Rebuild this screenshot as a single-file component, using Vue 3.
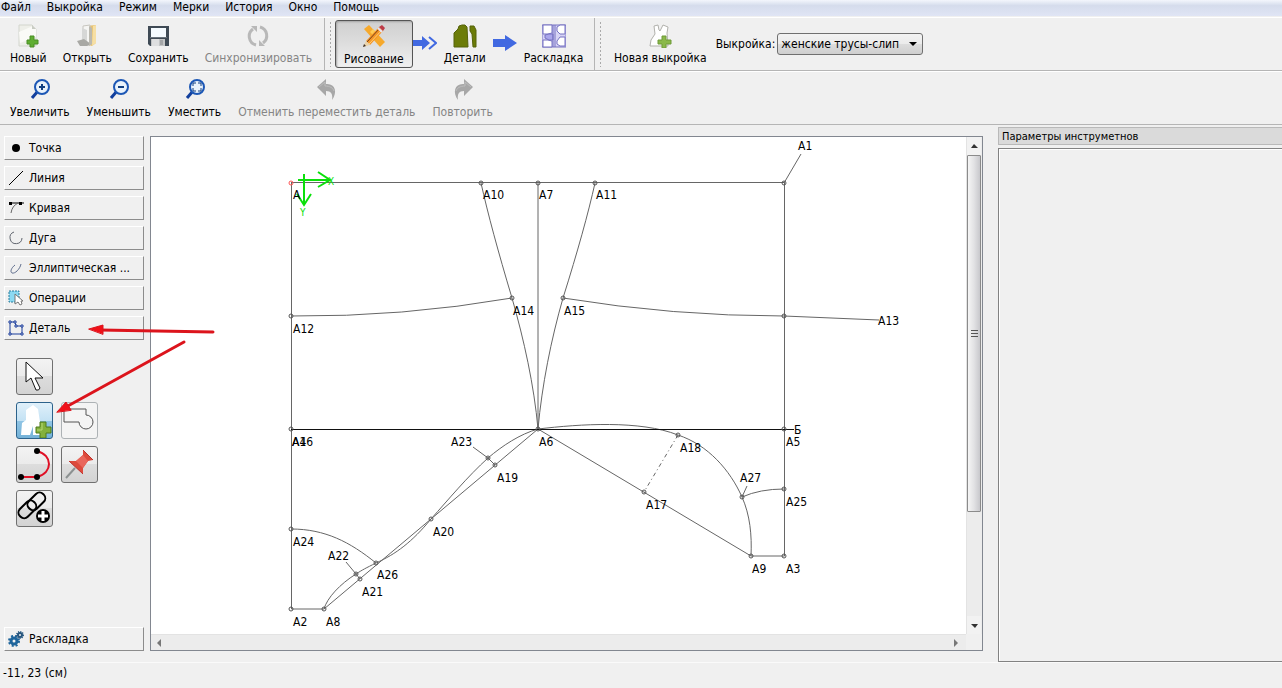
<template>
  <div class="app-window">
    <nav class="menu-bar">
      <a v-for="item in menu" :key="item" href="#" @click.prevent>{{ item }}</a>
    </nav>

    <header class="toolbar">
      <div class="group group-file">
        <button class="tool" type="button">
          <svg width="24" height="24" viewBox="0 0 24 24">
            <path d="M3 1h13l4 4v17H3z" fill="#eeefe9" stroke="#d3d6ce" />
            <path d="M3 8l14-6 3 3v8L4 19z" fill="#fafaf7" />
            <path d="M16 1v4h4z" fill="#c9ccc4" />
            <path d="M12 13h4v4h4v4h-4v3h-4v-3H9v-4h3z" transform="translate(2,-1)" fill="#5fae31" stroke="#4b8d27" />
          </svg>
          <span>Новый</span>
        </button>
        <button class="tool" type="button">
          <svg width="24" height="24" viewBox="0 0 24 24">
            <path d="M10 2l11-1v18l-4 3-7-2z" fill="#e5c274" />
            <path d="M18 2l3-1v18l-4 3z" fill="#f6dfa4" />
            <path d="M8 2l7-1v20H8z" fill="#f5f5f3" stroke="#c8c6c0" />
            <path d="M7 4l5 2v14l-5-3z" fill="#d6d7d6" />
            <path d="M2 17l7-2 7 5-4 2H5z" fill="#a8a8a4" />
            <path d="M14 2l3 2v16l-3 2z" fill="#bbb9b0" />
          </svg>
          <span>Открыть</span>
        </button>
        <button class="tool" type="button">
          <svg width="24" height="24" viewBox="0 0 24 24">
            <path d="M2 2h21v20H4l-2-2z" fill="#3f4a55" />
            <path d="M5 4h15v9H5z" fill="#f5fbff" />
            <path d="M4 13h17v1H4z" fill="#69737c" />
            <path d="M5 15h14v7H5z" fill="#c3c5c6" />
            <path d="M6 15h7v7H6z" fill="#dedfe0" />
            <path d="M14 16h3v5h-3z" fill="#a4a6a8" />
          </svg>
          <span>Сохранить</span>
        </button>
        <button class="tool" type="button" disabled>
          <svg width="24" height="24" viewBox="0 0 24 24" fill="none" stroke="#b8b8b8" stroke-width="3">
            <path d="M10 21A9 9 0 0 1 7 5" />
            <path d="M14 3a9 9 0 0 1 3 16" />
            <path d="M5 2h6v6zM19 22h-6v-6z" fill="#b8b8b8" stroke="none" />
          </svg>
          <span>Синхронизировать</span>
        </button>
      </div>

      <div class="group group-mode">
        <i class="grip"></i>
        <button class="tool pressed" type="button">
          <svg width="24" height="24" viewBox="0 0 24 24">
            <path d="M2 5l5-4 16 17-5 5z" fill="#f6a92c" />
            <path d="M8 8l3-3 3 3-3 3z" fill="#ffcb55" />
            <path d="M4 17L17 3l4 4L8 21z" fill="#f49526" />
            <path d="M5 18L18 4" stroke="#764019" stroke-width="1" />
            <path d="M7 20L20 6" stroke="#ffd076" stroke-width="1" />
            <path d="M4 17l4 4-7 2z" fill="#ead2a8" />
            <path d="M1 23l1-3 2 2z" fill="#3d3028" />
            <path d="M17 3l3-2 3 3-2 3z" fill="#bd3b48" />
            <path d="M16 4l4 4" stroke="#e9e3ef" stroke-width="2" />
          </svg>
          <span>Рисование</span>
        </button>
        <svg class="step" width="24" height="24" viewBox="0 0 24 24">
          <path d="M0 8h9V4l8 7-8 7v-4H0z" fill="#4169e1" />
          <path d="M16 5l7 6-7 6" fill="none" stroke="#4169e1" stroke-width="2" />
        </svg>
        <button class="tool" type="button">
          <svg width="24" height="24" viewBox="0 0 24 24">
            <path d="M1 9l4-4 1-3 3-1h3l2 2 1 20H1z" fill="#6c7c08" stroke="#55620b" />
            <path d="M17 2h4l2 4v17h-3l-1-13-2-3z" fill="#6c7c08" stroke="#55620b" />
          </svg>
          <span>Детали</span>
        </button>
        <svg class="step" width="24" height="24" viewBox="0 0 24 24">
          <path d="M0 7h12V3l12 8-12 8v-4H0z" fill="#4169e1" />
        </svg>
        <button class="tool" type="button">
          <svg width="24" height="24" viewBox="0 0 24 24" fill="#fff" stroke="#7673c2">
            <path d="M0 1h24v22H0z" fill="#d7d4f5" />
            <path d="M1 1h9v8l-4 1H1zM1 16h5l4 1v6H1z" />
            <path d="M15 3l3-2h5v9h-5l-3-3zM15 17l3-4h5v9h-5l-3-2z" />
            <path d="M3 11l4-1h4v6H7l-4-2z" fill="#aaa6eb" />
            <path d="M13 1v22M11 1v22" />
          </svg>
          <span>Раскладка</span>
        </button>
      </div>

      <div class="group group-pattern">
        <i class="grip"></i>
        <button class="tool" type="button">
          <svg width="24" height="24" viewBox="0 0 24 24">
            <path d="M6 2l4-1 1 5 1 1 3-6 5 2-1 6 1 13H2l1-6 4-6z" fill="#fff" stroke="#b1b1ac" />
            <path d="M14 12h4v4h5v4h-5v4h-4v-4h-4v-4h4z" fill="#8ab84a" stroke="#6f9a38" />
          </svg>
          <span>Новая выкройка</span>
        </button>
        <label class="pattern-label" for="pattern">Выкройка:</label>
        <div class="select-wrap">
          <select id="pattern">
            <option>женские трусы-слип</option>
          </select>
          <svg class="caret" width="8" height="4" viewBox="0 0 8 4"><path d="M0 0h8L4 4z" /></svg>
        </div>
      </div>
    </header>

    <div class="toolbar toolbar-view">
      <div class="group">
        <button v-for="z in zooms" :key="z.label" class="tool" type="button">
          <svg width="22" height="22" viewBox="0 0 22 22" fill="none">
            <path d="M9 13l-6 7" stroke="#123f9d" stroke-width="3" />
            <circle cx="13" cy="9" r="7" fill="#e9f2fb" stroke="#1c57b5" stroke-width="2" />
            <path :d="z.path" stroke="#123f80" :stroke-width="z.stroke" />
          </svg>
          <span>{{ z.label }}</span>
        </button>
        <button class="tool" type="button" disabled>
          <svg width="22" height="22" viewBox="0 0 22 22">
            <path d="M1 9l9-8v5c9-1 12 8 6 16 1-6-1-9-6-9v5z" fill="#a7a7a7" />
            <path d="M3 9l6-5v4c5 0 8 2 9 5" fill="none" stroke="#bdbdbd" />
          </svg>
          <span>Отменить переместить деталь</span>
        </button>
        <button class="tool" type="button" disabled>
          <svg width="22" height="22" viewBox="0 0 22 22">
            <path d="M21 9l-9-8v5C3 5 0 14 6 22c-1-6 1-9 6-9v5z" fill="#a7a7a7" />
            <path d="M19 9l-6-5v4c-5 0-8 2-9 5" fill="none" stroke="#bdbdbd" />
          </svg>
          <span>Повторить</span>
        </button>
      </div>
    </div>

    <main class="workspace">
      <aside class="toolbox">
        <button class="section" type="button">
          <svg width="16" height="16" viewBox="0 0 16 16"><circle cx="8" cy="8" r="4" /></svg>
          Точка
        </button>
        <button class="section" type="button">
          <svg width="16" height="16" viewBox="0 0 16 16"><path d="M1 15L15 1" stroke="#000" /></svg>
          Линия
        </button>
        <button class="section" type="button">
          <svg width="16" height="16" viewBox="0 0 16 16" fill="none">
            <path d="M2 3h14" stroke="#000" />
            <path d="M1 2h3v3H1zM11 2h3v3h-3z" fill="#000" />
            <path d="M10 3Q4 6 3 13" stroke="#666" />
          </svg>
          Кривая
        </button>
        <button class="section" type="button">
          <svg width="16" height="16" viewBox="0 0 16 16" fill="none">
            <path d="M6 2A6 6 0 1 0 14 8" stroke="#60656e" />
          </svg>
          Дуга
        </button>
        <button class="section" type="button">
          <svg width="16" height="16" viewBox="0 0 16 16" fill="none">
            <path d="M7 5C3 8 2 12 4 13c3 1 8-4 9-9" stroke="#5d6c8c" />
          </svg>
          Эллиптическая ...
        </button>
        <button class="section" type="button">
          <svg width="16" height="16" viewBox="0 0 16 16">
            <path d="M1 1h10v11H1z" fill="#8bd9f2" stroke="#287d9c" stroke-dasharray="2 1" />
            <path d="M7 4v10l3-2 2 3 2-1-1-3h2z" fill="#fff" stroke="#777" />
          </svg>
          Операции
        </button>
        <button class="section" type="button">
          <svg width="16" height="16" viewBox="0 0 16 16" fill="none" stroke="#1a3c9b">
            <path d="M2 2h5l1 4h6v8H2z" />
            <path d="M1 1h2v2H1zM6 1h2v2H6zM7 5h2v2H7zM13 5h2v2h-2zM13 13h2v2h-2zM1 13h2v2H1z" fill="#fff" />
          </svg>
          Деталь
        </button>

        <div class="palette">
          <button class="pick lone" type="button" aria-label="Указатель">
            <svg width="35" height="35" viewBox="0 0 35 35">
              <path d="M9 3v20l5-4 5 12q3 1 4-2l-5-10h8z" fill="#fff" stroke="#111" />
            </svg>
          </button>
          <button class="pick active" type="button" aria-label="Новая деталь">
            <svg width="35" height="35" viewBox="0 0 35 35">
              <path d="M9 7l7-5 5 4 2 13v13h-7v-9l-3 9H4l1-12 4-3z" fill="#fff" />
              <path d="M23 19h6v5h5v6h-5v5h-6v-5h-4v-6h4z" fill="#83b13c" stroke="#4e7b1c" />
              <path d="M25 20v7h-5" fill="none" stroke="#b9d979" />
            </svg>
          </button>
          <button class="pick" type="button" disabled aria-label="Объединить">
            <svg width="35" height="35" viewBox="0 0 35 35" fill="none" stroke="#555">
              <path d="M2 6h22v6A7 7 0 1 1 17 19H2z" />
            </svg>
          </button>
          <button class="pick" type="button" aria-label="Внутренний путь">
            <svg width="35" height="35" viewBox="0 0 35 35">
              <path d="M4 30h16M20 4C36 8 36 26 20 30" fill="none" stroke="#df1025" stroke-width="2" />
              <circle cx="20" cy="4" r="3" /><circle cx="4" cy="30" r="3" /><circle cx="20" cy="30" r="3" />
            </svg>
          </button>
          <button class="pick" type="button" aria-label="Булавка">
            <svg width="35" height="35" viewBox="0 0 35 35">
              <path d="M13 21L4 31" stroke="#8c9191" stroke-width="2" />
              <path d="M21 3l10 10-5 1-5 7 0 6L7 14h7l7-6z" fill="#dd4a3c" />
              <path d="M21 8l5 6-5 7-7-7z" fill="#e9665b" />
              <path d="M21 3l10 10M7 14l14 13" stroke="#bd302b" />
            </svg>
          </button>
          <button class="pick" type="button" aria-label="Группа">
            <svg width="35" height="35" viewBox="0 0 35 35" fill="none" stroke="#000" stroke-width="2">
              <rect x="-10" y="-5" width="20" height="11" rx="5" transform="translate(19,10) rotate(-45)" />
              <rect x="-10" y="-5" width="20" height="11" rx="5" transform="translate(10,18) rotate(-45)" />
              <circle cx="26" cy="25" r="7" fill="#000" stroke="none" />
              <path d="M26 20v10M21 25h10" stroke="#fff" stroke-width="3" />
            </svg>
          </button>
        </div>

        <button class="section section-last" type="button">
          <svg width="16" height="16" viewBox="0 0 16 16" fill="none">
            <circle cx="6" cy="10" r="3" stroke="#1e659c" stroke-width="3" />
            <circle cx="6" cy="10" r="5" stroke="#1e659c" stroke-width="2" stroke-dasharray="2 2" />
            <circle cx="12" cy="4" r="2" stroke="#28577f" stroke-width="2" />
            <circle cx="12" cy="4" r="3" stroke="#28577f" stroke-width="2" stroke-dasharray="1 1" />
          </svg>
          Раскладка
        </button>
      </aside>

      <section class="scene">
        <div class="viewport">
          <svg class="drawing" width="815" height="497" viewBox="151 137 815 497">
            <g class="lines">
              <path v-for="d in lines" :key="d" :d="d" />
              <path class="base" d="M291 429.500H794" />
              <path class="dash-dot" d="M678 435L644 492" />
            </g>
            <g class="nodes">
              <circle v-for="(p, i) in nodes" :key="i" :cx="p[0]" :cy="p[1]" r="2" />
              <circle class="origin" cx="291" cy="183" r="2" />
            </g>
            <g class="axes">
              <path d="M298 180H329M318 172L330 180L318 187M304 174V205M297 194L304 205L311 194" />
              <text x="328" y="185">X</text>
              <text x="300" y="216">Y</text>
            </g>
            <text v-for="l in labels" :key="l[0]" class="label" :x="l[1]" :y="l[2]">{{ l[0] }}</text>
          </svg>
        </div>
        <div class="scroll-v">
          <svg width="14" height="18" viewBox="0 0 14 18"><path d="M4 11l3-4 4 4z" fill="#333" /></svg>
          <div class="thumb"><i></i></div>
          <svg width="14" height="18" viewBox="0 0 14 18"><path d="M4 8h7l-3 4z" fill="#333" /></svg>
        </div>
        <div class="scroll-h">
          <svg width="16" height="14" viewBox="0 0 16 14"><path d="M10 3v8L6 7z" fill="#777" /></svg>
          <svg width="16" height="14" viewBox="0 0 16 14"><path d="M4 3v8l4-4z" fill="#777" /></svg>
        </div>
      </section>

      <aside class="dock">
        <h2>Параметры инструметнов</h2>
        <div class="dock-body"></div>
      </aside>
    </main>

    <footer class="status">-11, 23 (см)</footer>

    <!-- hint arrows over the toolbox -->
    <svg class="hints" width="220" height="100" viewBox="0 320 220 100">
      <path d="M213 332L100 330M184 342L66 407" />
      <path class="head" d="M89 329l14-4v9zM57 412l9-10 5 8z" />
    </svg>
  </div>
</template>

<script setup>
const menu = ['Файл', 'Выкройка', 'Режим', 'Мерки', 'История', 'Окно', 'Помощь']

const zooms = [
  { label: 'Увеличить', path: 'M10 9h6M13 6v6', stroke: 2 },
  { label: 'Уменьшить', path: 'M10 9h6', stroke: 2 },
  { label: 'Уместить', path: 'M9 8V5h3M14 5h3v3M17 10v3h-3M12 13H9v-3', stroke: 1 }
]

// Scene coordinates
const lines = [
  'M291.500 183V609H324',
  'M291 182.500H784.500V556H751',
  'M538 183V429',
  'M784 183L801 154',
  'M481 183Q491 228 512 298C524 340 534 385 538 429',
  'M595 183Q585 228 563 298C551 340 542 385 538 429',
  'M291 316Q402 317 512 298',
  'M563 298Q673 316 784 316L879 320',
  'M324 609L538 429L751 556',
  'M538 429C580 424 640 420 678 435C708 445 730 470 742 497C750 515 752 535 751 556',
  'M742 497Q760 489 784 489',
  'M747 486L742 497',
  'M538 429C520 434 502 446 488 458C468 476 448 500 431 519C412 542 396 554 376 563C366 568 362 570 356 574C340 584 327 598 324 609',
  'M473 447L488 458L495 465',
  'M346 562L356 574L360 579',
  'M291 529C325 529 350 542 376 563'
]

const nodes = [
  [481, 183], [538, 183], [595, 183], [784, 183],
  [512, 298], [563, 298], [291, 316], [784, 316],
  [291, 429], [538, 429], [784, 429], [488, 458],
  [495, 465], [431, 519], [291, 529], [376, 563],
  [356, 574], [360, 579], [291, 609], [324, 609],
  [678, 435], [644, 492], [742, 497], [784, 489],
  [751, 556], [784, 556]
]

// A4 and A16 share one point, so their labels lie on each other
const labels = [
  ['A', 293, 199], ['A10', 483, 199], ['A7', 539, 199], ['A11', 596, 199],
  ['A1', 798, 150], ['A14', 513, 315], ['A15', 564, 315], ['A12', 293, 333],
  ['A13', 878, 325], ['A4', 292, 446], ['A16', 292, 446], ['A6', 539, 446],
  ['A23', 451, 446], ['A19', 497, 482], ['A20', 433, 536], ['A24', 293, 546],
  ['A22', 328, 560], ['A26', 377, 579], ['A21', 362, 596], ['A2', 293, 626],
  ['A8', 326, 626], ['A18', 680, 452], ['A17', 646, 509], ['A27', 740, 482],
  ['Б', 794, 434], ['A5', 786, 446], ['A25', 786, 506], ['A9', 752, 573],
  ['A3', 786, 573]
]
</script>

<style>
body {
  background: #f0f0f0;
}
</style>

<style scoped>
.app-window {
  position: relative;
  display: flex;
  flex-direction: column;
  min-height: 100vh;
  background: #f0f0f0;
  color: #000;
  font-family: "DejaVu Sans Condensed", "Noto Sans", sans-serif;
  font-size: 12px;
  line-height: 14px;
}

button,
select {
  font: inherit;
  color: inherit;
}

.menu-bar {
  display: flex;
  gap: 16px;
  height: 16px;
  padding-left: 1px;
  background: linear-gradient(#f3f6fc, #d5dcec 35%, #e0e5f5);
}

.menu-bar a {
  color: #000;
  text-decoration: none;
}

.toolbar {
  display: flex;
  height: 54px;
  border-top: 1px solid #fff;
  border-bottom: 1px solid #b5b5b5;
  box-sizing: border-box;
  margin-top: 1px;
}

.toolbar-view {
  margin-top: 0;
}

.group {
  display: flex;
  align-items: center;
  box-sizing: border-box;
  gap: 4px;
  padding-left: 4px;
}

.toolbar-view .group {
  gap: 5px;
}

.group-file {
  width: 325px;
  border-right: 1px solid #b5b5b5;
}

.group-mode {
  width: 270px;
  gap: 0;
  border-right: 1px solid #b5b5b5;
}

.group-pattern {
  gap: 0;
}

.grip {
  width: 3px;
  height: 46px;
  margin-right: 3px;
  background: radial-gradient(circle, #aaa 1px, transparent 1px) 0 0 / 3px 4px;
}

.tool {
  display: flex;
  flex-direction: column;
  align-items: center;
  justify-content: space-between;
  height: 48px;
  padding: 3px 5px 2px;
  border: 1px solid transparent;
  border-radius: 3px;
  background: none;
  box-sizing: border-box;
  white-space: nowrap;
}

.group-mode .tool {
  padding: 3px 6px 2px;
}

.tool:disabled {
  color: #858585;
}

.group-mode .pressed {
  padding: 3px 8px 1px;
  border-color: #555;
  background: linear-gradient(#cfcfcf, #dedede 50%, #f0f0f0);
  box-shadow: inset 1px 1px 2px #a5a5a5;
}

.group-pattern .tool {
  padding: 3px 8px 2px;
}

.pattern-label {
  margin-right: 2px;
}

.select-wrap {
  position: relative;
}

select {
  appearance: none;
  display: block;
  width: 146px;
  height: 22px;
  padding: 0 20px 0 3px;
  border: 1px solid #707070;
  border-radius: 3px;
  background: linear-gradient(#f3f3f3, #ebebeb 50%, #dddddd 50%, #cfcfcf);
}

.caret {
  position: absolute;
  right: 6px;
  top: 9px;
  pointer-events: none;
}

.workspace {
  display: flex;
  flex: 1;
}

.toolbox {
  display: flex;
  flex-direction: column;
  gap: 6px;
  width: 140px;
  padding: 11px 6px 11px 4px;
}

.section {
  display: flex;
  align-items: center;
  gap: 5px;
  height: 24px;
  padding: 0 3px;
  border: 1px solid;
  border-color: #fff #8c8c8c #8c8c8c #fff;
  background: #f0f0f0;
  box-sizing: border-box;
}

.section-last {
  margin-top: auto;
}

.palette {
  display: grid;
  grid-template-columns: 37px 37px;
  gap: 7px 8px;
  padding: 12px;
}

.pick {
  width: 37px;
  height: 37px;
  padding: 0;
  border: 1px solid #707070;
  border-radius: 3px;
  background: linear-gradient(#f3f3f3, #ebebeb 50%, #dddddd 50%, #d3d3d3);
}

.pick svg {
  display: block;
}

.pick.active {
  grid-column: 1;
  border-color: #2c628b;
  background: linear-gradient(#e0f0fa, #c4e2f4 50%, #91c5e5 50%, #74b2d8);
}

.pick:disabled {
  border-color: #adb2b5;
  background: #f4f4f4;
}

.scene {
  display: grid;
  flex: 1;
  grid-template-columns: minmax(0, 1fr) 16px;
  grid-template-rows: 1fr 16px;
  min-width: 0;
  margin: 11px 15px 11px 0;
  border: 1px solid #828790;
  background: #f0f0f0;
}

.viewport {
  overflow: hidden;
  background: #fff;
}

.drawing {
  display: block;
}

.lines path {
  fill: none;
  stroke: #666;
}

.lines .base {
  stroke: #111;
}

.lines .dash-dot {
  stroke-dasharray: 4 3 1 3;
}

.nodes circle {
  fill: none;
  stroke: #555;
}

.nodes .origin {
  stroke: #f55;
}

.axes path {
  fill: none;
  stroke: #0be00b;
  stroke-width: 2px;
}

.axes text {
  fill: #0be00b;
  font-size: 10px;
}

.scroll-v {
  display: flex;
  flex-direction: column;
  padding-right: 1px;
  border-left: 1px solid #e3e3e3;
  background: #ececec;
}

.scroll-v > svg {
  background: #f2f2f2;
}

.thumb {
  display: flex;
  align-items: center;
  justify-content: center;
  height: 355px;
  margin-bottom: auto;
  border: 1px solid #8b8b8b;
  border-radius: 1px;
  background: linear-gradient(to right, #f5f5f5, #e2e2e4 50%, #c8c8cc);
}

.thumb i {
  width: 7px;
  height: 8px;
  background: repeating-linear-gradient(#555 0 1px, transparent 1px 3px);
}

.scroll-h {
  display: flex;
  align-items: center;
  justify-content: space-between;
  border-top: 1px solid #e3e3e3;
  background: #ececec;
}

.dock {
  display: flex;
  flex-direction: column;
  gap: 3px;
  width: 284px;
  padding-top: 2px;
}

.dock h2 {
  margin: 0;
  padding: 2px 3px 1px;
  border: 1px solid #b9b9b9;
  border-right: 0;
  background: #dadada;
  font-size: 11px;
  font-weight: normal;
  line-height: 13px;
}

.dock-body {
  flex: 1;
  border: 1px solid #828282;
  border-right: 0;
  box-shadow: inset 1px 1px #fff;
}

.status {
  height: 19px;
  padding: 3px;
  border-top: 1px solid #fafafa;
}

.hints {
  position: absolute;
  left: 0;
  top: 320px;
  pointer-events: none;
}

.hints path {
  fill: none;
  stroke: #dc141c;
  stroke-width: 3px;
  stroke-linecap: round;
}

.hints .head {
  fill: #f01018;
  stroke-width: 1px;
}
</style>
